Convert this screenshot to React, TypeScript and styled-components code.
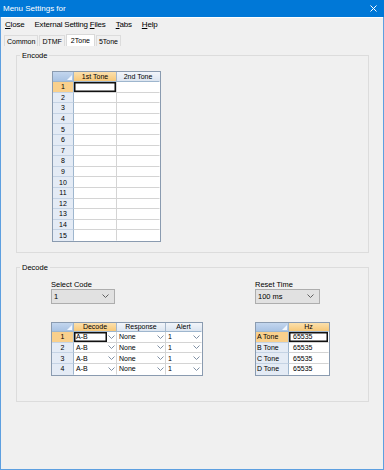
import React from 'react';
import styled, { createGlobalStyle } from 'styled-components';

const GlobalStyle = createGlobalStyle`
  html, body {
    margin: 0;
    padding: 0;
    background: #ffffff;
  }
  * {
    box-sizing: border-box;
  }
`;

const Window = styled.div`
  width: 384px;
  height: 470px;
  display: flex;
  flex-direction: column;
  background: #f0f0f0;
  border: 1px solid #5d9fe0;
  border-top: none;
  font-family: "Liberation Sans", Arial, sans-serif;
  color: #000;
`;

const TitleBar = styled.div`
  height: 17px;
  margin: 0 -1px;
  padding: 0 7px 0 3px;
  display: flex;
  align-items: center;
  justify-content: space-between;
  background: #0078d7;
  color: #fff;
  font-size: 8px;
`;

const MenuBar = styled.div`
  height: 14px;
  display: flex;
  align-items: center;
  gap: 10px;
  padding-left: 4px;
  font-size: 8px;
  letter-spacing: -0.2px;
  border-top: 1px solid #ffffff;
`;

const MenuItem = styled.span`
  white-space: nowrap;
`;

const TabStrip = styled.div`
  height: 15px;
  display: flex;
  align-items: flex-end;
  padding-left: 3px;
  font-size: 7px;
`;

const Tab = styled.div<{ $active?: boolean }>`
  height: ${p => (p.$active ? 12 : 11)}px;
  padding: 0 ${p => (p.$active ? 4 : 2)}px;
  margin-right: 1px;
  display: flex;
  align-items: center;
  background: ${p => (p.$active ? '#ffffff' : '#f0f0f0')};
  border: 1px solid ${p => (p.$active ? '#d9d9d9' : '#dcdcdc')};
  border-bottom: none;
`;

const Content = styled.div`
  padding: 5px 14px 0 15px;
  display: flex;
  flex-direction: column;
  gap: 10px;
`;

const Group = styled.fieldset`
  margin: 0;
  padding: 0 0 0 3px;
  border: 1px solid #dcdcdc;
  min-width: 0;
`;

const Legend = styled.legend`
  margin: 0;
  padding: 0 2px;
  font-size: 7.5px;
  line-height: 9px;
`;

const GroupBody = styled.div<{ $pad: string }>`
  padding: ${p => p.$pad};
`;

const DecodeBody = styled.div`
  display: grid;
  grid-template-columns: 204px auto;
  row-gap: 18px;
`;

const Field = styled.div`
  display: flex;
  flex-direction: column;
  align-items: flex-start;
`;

const FieldLabel = styled.span`
  font-size: 7.5px;
  line-height: 9px;
`;

const Combo = styled.div<{ $w: number }>`
  width: ${p => p.$w}px;
  height: 15px;
  display: flex;
  align-items: center;
  justify-content: space-between;
  padding: 0 5px 0 2px;
  background: #e1e1e1;
  border: 1px solid #adadad;
  font-size: 7.5px;
`;

/* data grid */

const GridBox = styled.div<{ $cols: string; $rows: string }>`
  display: grid;
  grid-template-columns: ${p => p.$cols};
  grid-template-rows: ${p => p.$rows};
  width: max-content;
  border: 1px solid #8a9bb0;
  background: #fff;
  font-size: 7px;
  line-height: 1;
`;

const Corner = styled.div`
  display: flex;
  align-items: flex-end;
  justify-content: flex-end;
  padding: 1px;
  background: linear-gradient(#c3d6ee, #a9c3e3);
  border-right: 1px solid #9eb6ce;
  border-bottom: 1px solid #9eb6ce;
`;

const ColHead = styled.div<{ $active?: boolean; $last?: boolean }>`
  display: flex;
  align-items: center;
  justify-content: center;
  background: ${p =>
    p.$active
      ? 'linear-gradient(#fbe0ad, #f7c878)'
      : 'linear-gradient(#f2f5fa, #dce5f0)'};
  border-right: 1px solid ${p => (p.$last ? 'transparent' : '#a6b7cb')};
  border-bottom: 1px solid #9eb6ce;
`;

const RowHead = styled.div<{ $active?: boolean; $left?: boolean; $last?: boolean }>`
  display: flex;
  align-items: center;
  justify-content: ${p => (p.$left ? 'flex-start' : 'center')};
  padding-left: ${p => (p.$left ? 1 : 0)}px;
  background: ${p => (p.$active ? '#f9d08c' : '#e4ebf5')};
  border-right: 1px solid #9eb6ce;
  border-bottom: 1px solid ${p => (p.$last ? 'transparent' : '#c5d3e4')};
  white-space: nowrap;
`;

const Cell = styled.div<{ $lastCol?: boolean; $lastRow?: boolean }>`
  display: flex;
  align-items: stretch;
  border-right: 1px solid ${p => (p.$lastCol ? 'transparent' : '#d4d4d4')};
  border-bottom: 1px solid ${p => (p.$lastRow ? 'transparent' : '#d4d4d4')};
`;

const CellText = styled.div<{ $current?: boolean; $indent?: number }>`
  flex: 1;
  display: flex;
  align-items: center;
  padding-left: ${p => p.$indent ?? 2}px;
  white-space: nowrap;
  box-shadow: ${p => (p.$current ? 'inset 0 0 0 1.5px #111' : 'none')};
`;

const ArrowBox = styled.div`
  width: 9px;
  display: flex;
  align-items: center;
  justify-content: center;
`;

const Chevron = ({ color = '#606060' }: { color?: string }) => (
  <svg width="7" height="4" viewBox="0 0 7 4">
    <polyline points="0.5,0.5 3.5,3.5 6.5,0.5" fill="none" stroke={color} strokeWidth="1" />
  </svg>
);

const CornerMark = () => (
  <svg width="5" height="5" viewBox="0 0 5 5">
    <polygon points="5,0 5,5 0,5" fill="#f4f8fd" />
  </svg>
);

const CloseIcon = () => (
  <svg width="7" height="7" viewBox="0 0 7 7">
    <path d="M0.5 0.5 L6.5 6.5 M6.5 0.5 L0.5 6.5" stroke="#fff" strokeWidth="1" />
  </svg>
);

type Column = { title: string; width: number };

type GridProps = {
  rowHeadWidth: number;
  columns: Column[];
  headHeight: number;
  rowHeight: number;
  rowLabels: string[];
  leftLabels?: boolean;
  renderCell: (r: number, c: number) => React.ReactNode;
};

const DataGrid = ({
  rowHeadWidth,
  columns,
  headHeight,
  rowHeight,
  rowLabels,
  leftLabels,
  renderCell,
}: GridProps) => {
  const cols = [rowHeadWidth, ...columns.map(c => c.width)].map(w => `${w}px`).join(' ');
  const rows = `${headHeight}px repeat(${rowLabels.length}, ${rowHeight}px)`;
  return (
    <GridBox $cols={cols} $rows={rows}>
      <Corner>
        <CornerMark />
      </Corner>
      {columns.map((c, i) => (
        <ColHead key={c.title} $active={i === 0} $last={i === columns.length - 1}>
          {c.title}
        </ColHead>
      ))}
      {rowLabels.map((label, r) => (
        <React.Fragment key={label}>
          <RowHead $active={r === 0} $left={leftLabels} $last={r === rowLabels.length - 1}>
            {label}
          </RowHead>
          {columns.map((c, ci) => (
            <Cell
              key={c.title}
              $lastCol={ci === columns.length - 1}
              $lastRow={r === rowLabels.length - 1}
            >
              {renderCell(r, ci)}
            </Cell>
          ))}
        </React.Fragment>
      ))}
    </GridBox>
  );
};

const encodeRows = Array.from({ length: 15 }, (_, i) => String(i + 1));
const decodeValues = ['A-B', 'None', '1'];
const toneRows = ['A Tone', 'B Tone', 'C Tone', 'D Tone'];

export default function App() {
  return (
    <>
      <GlobalStyle />
      <Window>
        <TitleBar>
          <span>Menu Settings for</span>
          <CloseIcon />
        </TitleBar>
        <MenuBar>
          <MenuItem><u>C</u>lose</MenuItem>
          <MenuItem>External Setting <u>F</u>iles</MenuItem>
          <MenuItem><u>T</u>abs</MenuItem>
          <MenuItem><u>H</u>elp</MenuItem>
        </MenuBar>
        <TabStrip>
          <Tab>Common</Tab>
          <Tab>DTMF</Tab>
          <Tab $active>2Tone</Tab>
          <Tab>5Tone</Tab>
        </TabStrip>
        <Content>
          <Group>
            <Legend>Encode</Legend>
            <GroupBody $pad="11px 0 10px 32px">
              <DataGrid
                rowHeadWidth={21}
                columns={[
                  { title: '1st Tone', width: 43 },
                  { title: '2nd Tone', width: 43 },
                ]}
                headHeight={10}
                rowHeight={10.6}
                rowLabels={encodeRows}
                renderCell={(r, c) => <CellText $current={r === 0 && c === 0} />}
              />
            </GroupBody>
          </Group>
          <Group>
            <Legend>Decode</Legend>
            <GroupBody $pad="8px 0 25px 31px">
              <DecodeBody>
                <Field>
                  <FieldLabel>Select Code</FieldLabel>
                  <Combo $w={64}>
                    <span>1</span>
                    <Chevron />
                  </Combo>
                </Field>
                <Field>
                  <FieldLabel>Reset Time</FieldLabel>
                  <Combo $w={65}>
                    <span>100 ms</span>
                    <Chevron />
                  </Combo>
                </Field>
                <DataGrid
                  rowHeadWidth={22}
                  columns={[
                    { title: 'Decode', width: 43 },
                    { title: 'Response', width: 49 },
                    { title: 'Alert', width: 36 },
                  ]}
                  headHeight={9}
                  rowHeight={10.7}
                  rowLabels={['1', '2', '3', '4']}
                  renderCell={(r, c) => (
                    <>
                      <CellText $current={r === 0 && c === 0}>{decodeValues[c]}</CellText>
                      <ArrowBox>
                        <Chevron color="#8090a4" />
                      </ArrowBox>
                    </>
                  )}
                />
                <DataGrid
                  rowHeadWidth={33}
                  columns={[{ title: 'Hz', width: 40 }]}
                  headHeight={9}
                  rowHeight={10.7}
                  rowLabels={toneRows}
                  leftLabels
                  renderCell={r => (
                    <CellText $current={r === 0} $indent={4}>
                      65535
                    </CellText>
                  )}
                />
              </DecodeBody>
            </GroupBody>
          </Group>
        </Content>
      </Window>
    </>
  );
}
